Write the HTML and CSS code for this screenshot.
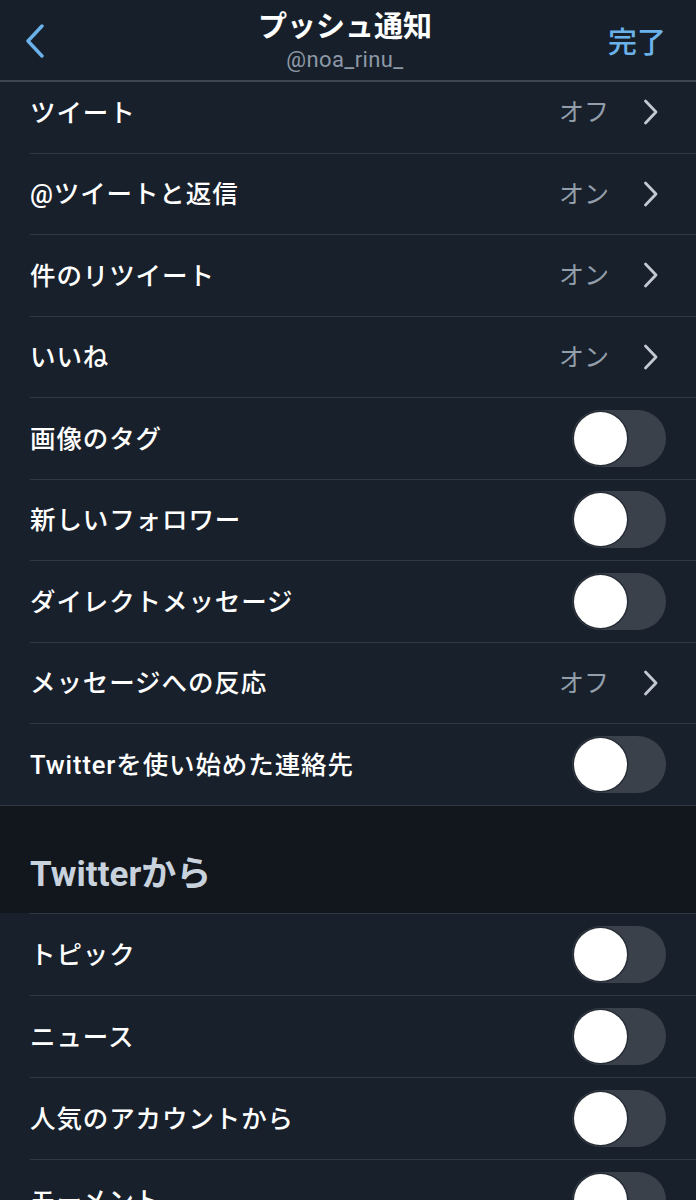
FILE: index.html
```html
<!DOCTYPE html>
<html lang="ja">
<head>
    <meta charset="UTF-8">
    <meta name="viewport" content="width=device-width, initial-scale=1.0">
    <title>プッシュ通知</title>
    <link rel="stylesheet" href="styles.css">
</head>
<body>

    <header class="nav">
        <a class="nav-back" href="#">
            <svg width="22" height="34" viewBox="0 0 22 34"><path d="M18 2 L4 17 L18 32" fill="none" stroke="#6cb2ea" stroke-width="3.4" stroke-linecap="round" stroke-linejoin="round"/></svg>
        </a>
        <div class="nav-title">
            <div class="title">プッシュ通知</div>
            <div class="subtitle">@noa_rinu_</div>
        </div>
        <a class="nav-done" href="#">完了</a>
    </header>

    <main class="list">
        <div class="group">
            <div class="row"><span class="label">ツイート</span><span class="value">オフ</span><svg class="chev" width="16" height="26" viewBox="0 0 16 26"><path d="M2.5 2 L13 13 L2.5 24" fill="none" stroke="#c2c9d1" stroke-width="2.8" stroke-linecap="round" stroke-linejoin="round"/></svg></div>
            <div class="row"><span class="label">@ツイートと返信</span><span class="value">オン</span><svg class="chev" width="16" height="26" viewBox="0 0 16 26"><path d="M2.5 2 L13 13 L2.5 24" fill="none" stroke="#c2c9d1" stroke-width="2.8" stroke-linecap="round" stroke-linejoin="round"/></svg></div>
            <div class="row"><span class="label">件のリツイート</span><span class="value">オン</span><svg class="chev" width="16" height="26" viewBox="0 0 16 26"><path d="M2.5 2 L13 13 L2.5 24" fill="none" stroke="#c2c9d1" stroke-width="2.8" stroke-linecap="round" stroke-linejoin="round"/></svg></div>
            <div class="row"><span class="label">いいね</span><span class="value">オン</span><svg class="chev" width="16" height="26" viewBox="0 0 16 26"><path d="M2.5 2 L13 13 L2.5 24" fill="none" stroke="#c2c9d1" stroke-width="2.8" stroke-linecap="round" stroke-linejoin="round"/></svg></div>
            <div class="row"><span class="label">画像のタグ</span><span class="toggle"></span></div>
            <div class="row"><span class="label">新しいフォロワー</span><span class="toggle"></span></div>
            <div class="row"><span class="label">ダイレクトメッセージ</span><span class="toggle"></span></div>
            <div class="row"><span class="label">メッセージへの反応</span><span class="value">オフ</span><svg class="chev" width="16" height="26" viewBox="0 0 16 26"><path d="M2.5 2 L13 13 L2.5 24" fill="none" stroke="#c2c9d1" stroke-width="2.8" stroke-linecap="round" stroke-linejoin="round"/></svg></div>
            <div class="row"><span class="label">Twitterを使い始めた連絡先</span><span class="toggle"></span></div>
        </div>

        <h2 class="section-title">Twitterから</h2>

        <div class="group group-top">
            <div class="row"><span class="label">トピック</span><span class="toggle"></span></div>
            <div class="row"><span class="label">ニュース</span><span class="toggle"></span></div>
            <div class="row"><span class="label">人気のアカウントから</span><span class="toggle"></span></div>
            <div class="row"><span class="label">モーメント</span><span class="toggle"></span></div>
        </div>
    </main>

</body>
</html>
```

FILE: styles.css
```css
body {
    margin: 0;
    background-color: #18202b;
    color: #ffffff;
    font-family: Roboto, "Noto Sans CJK JP", sans-serif;
    overflow: hidden;
}
a {
    text-decoration: none;
}
.nav {
    position: relative;
    z-index: 1;
    height: 80px;
    display: flex;
    align-items: center;
    justify-content: space-between;
    padding: 0 30px 0 24px;
    background-color: #17202a;
    border-bottom: 2px solid #3e4651;
}
.nav-back {
    display: flex;
    width: 60px;
    margin-top: 2px;
}
.nav-title {
    text-align: center;
    margin-top: 6px;
}
.title {
    font-size: 29px;
    font-weight: 700;
    line-height: 34px;
}
.subtitle {
    font-size: 22px;
    color: #8d99a6;
    line-height: 32px;
    letter-spacing: 0.4px;
}
.nav-done {
    width: 60px;
    text-align: right;
    color: #6cb2ea;
    font-size: 29px;
    font-weight: 500;
    margin-top: 0;
}
.list {
    margin-top: -10px;
}
.group {
    border-bottom: 1px solid #2f3843;
}
.row {
    height: 80.5px;
    margin-left: 30px;
    padding-right: 30px;
    display: flex;
    align-items: center;
    border-bottom: 1px solid #2f3843;
}
.group .row:last-child {
    border-bottom: none;
}
.group-top {
    border-bottom: none;
}
.group-top .row {
    border-bottom: none;
    border-top: 1px solid #2f3843;
    height: 81px;
}
.label {
    flex: 1;
    font-size: 25.5px;
    font-weight: 500;
    letter-spacing: 0.9px;
    margin-bottom: 4px;
}
.value {
    font-size: 25px;
    color: #929eaa;
    margin-right: 34px;
    margin-bottom: 4px;
}
.chev {
    margin-right: 7px;
}
.toggle {
    position: relative;
    width: 94px;
    height: 57px;
    border-radius: 29px;
    background-color: #3b414b;
}
.toggle::after {
    content: "";
    position: absolute;
    left: 2px;
    top: 2px;
    width: 53px;
    height: 53px;
    border-radius: 50%;
    background-color: #ffffff;
    box-shadow: 0 0 0 1.5px #262c35;
}
.section-title {
    margin: 0;
    height: 107px;
    padding: 22px 0 0 30px;
    display: flex;
    align-items: center;
    background-color: #12161d;
    color: #c7d2dd;
    font-size: 35px;
    font-weight: 700;
    box-sizing: border-box;
}
```
